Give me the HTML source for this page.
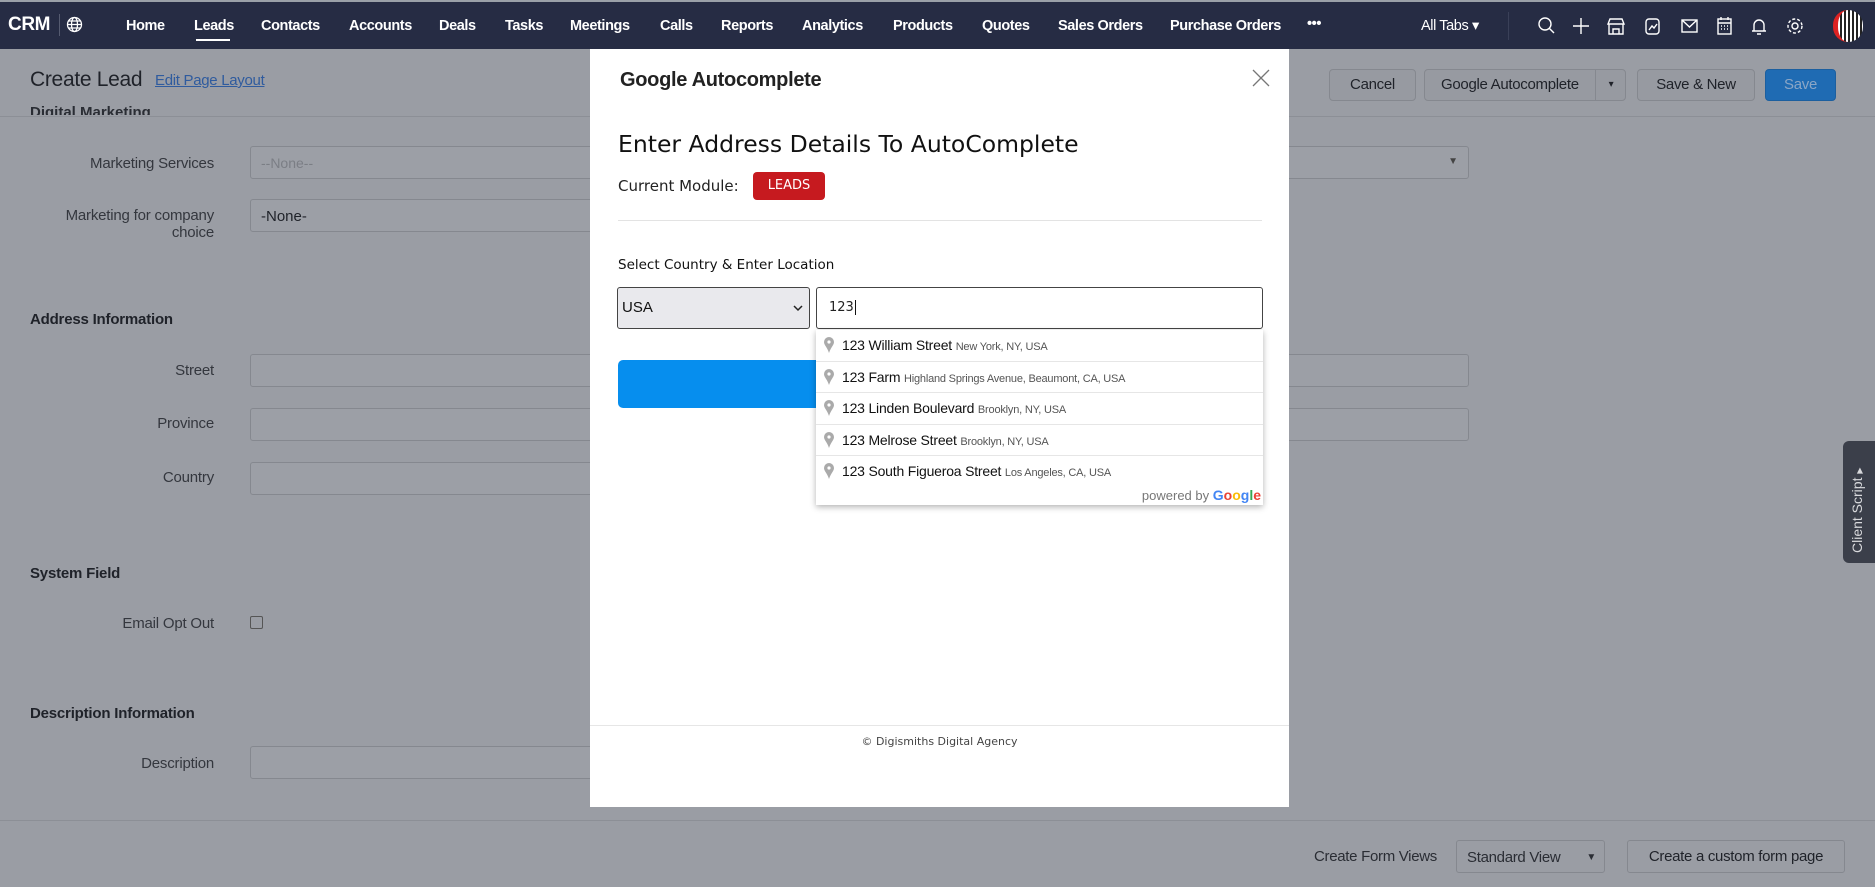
<!DOCTYPE html>
<html><head><meta charset="utf-8"><style>
*{box-sizing:border-box;margin:0;padding:0}
body{width:1875px;height:887px;overflow:hidden;background:#9a9da4;font-family:"Liberation Sans",sans-serif;position:relative;color:#1f2229}
.a{position:absolute;white-space:nowrap}
.nav{position:absolute;left:0;top:0;width:1875px;height:49px;background:#262c44;border-top:2px solid #9aa0a8}
.nav .a{color:#fff;font-size:14.5px;top:16px;font-weight:bold;letter-spacing:-0.4px}
.lbl{position:absolute;right:1661px;font-size:15px;color:#34373e;text-align:right;white-space:nowrap;letter-spacing:-0.2px}
.inp{position:absolute;left:250px;height:33px;border:1px solid #85888f;border-radius:3px;background:#9c9fa6}
.sec{position:absolute;left:30px;font-size:15px;font-weight:bold;color:#1f2229;letter-spacing:-0.2px}
.btn{position:absolute;top:69px;height:32px;border:1px solid #85888f;border-radius:4px;background:#979aa1;font-size:15px;color:#1f2229;text-align:center;line-height:30px;letter-spacing:-0.3px}
.modal{position:absolute;left:590px;top:49px;width:699px;height:758px;background:#fff}
.dj{font-family:"DejaVu Sans",sans-serif}
.row{position:absolute;left:0;width:100%;height:31px;border-top:1px solid #e6e6e6;font-size:14px;color:#111;line-height:31px;padding-left:26px;letter-spacing:-0.2px}
.row small{font-size:11px;color:#555}
.pin{position:absolute;left:8px;top:7px}
</style></head><body>
<div class="nav">
 <div class="a" style="left:8px;top:12px;font-size:19px;color:#fff;font-weight:bold">CRM</div>
 <div class="a" style="left:59px;top:12px;width:1px;height:22px;background:#555b70"></div>
 <svg class="a" style="left:66px;top:14px" width="17" height="17" viewBox="0 0 17 17" fill="none" stroke="#fff" stroke-width="1.3"><circle cx="8.5" cy="8.5" r="7"/><ellipse cx="8.5" cy="8.5" rx="3" ry="7"/><path d="M1.5 8.5h14M2.5 5h12M2.5 12h12"/></svg>
 <div class="a" style="left:126px">Home</div>
 <div class="a" style="left:194px">Leads</div>
 <div class="a" style="left:196px;top:37px;width:34px;height:2px;background:#fff"></div>
 <div class="a" style="left:261px">Contacts</div>
 <div class="a" style="left:349px">Accounts</div>
 <div class="a" style="left:439px">Deals</div>
 <div class="a" style="left:505px">Tasks</div>
 <div class="a" style="left:570px">Meetings</div>
 <div class="a" style="left:660px">Calls</div>
 <div class="a" style="left:721px">Reports</div>
 <div class="a" style="left:802px">Analytics</div>
 <div class="a" style="left:893px">Products</div>
 <div class="a" style="left:982px">Quotes</div>
 <div class="a" style="left:1058px">Sales Orders</div>
 <div class="a" style="left:1170px">Purchase Orders</div>
 <div class="a" style="left:1307px;top:14px">•••</div>
 <div class="a" style="left:1421px;font-weight:normal">All Tabs ▾</div>
 <div class="a" style="left:1508px;top:10px;width:1px;height:28px;background:#3a4058"></div>
 <svg class="a" style="left:1536px;top:14px" width="280" height="20" viewBox="0 0 280 20" fill="none" stroke="#fff" stroke-width="1.4">
  <circle cx="9" cy="8" r="6"/><path d="M13 12l5 5"/>
  <path d="M45 2v16M37 10h16"/>
  <path d="M74 3h12l2 5H72zM73 8v10h14V8M77 18v-5h6v5"/>
  <rect x="110" y="3" width="13" height="15" rx="3"/><path d="M113 14l3-4 2 2 3-4"/>
  <rect x="146" y="4" width="15" height="12"/><path d="M146 4l7.5 7 7.5-7"/>
  <rect x="182" y="3" width="13" height="15"/><path d="M182 7h13M185 1v3M192 1v3M185 10h1M188 10h1M191 10h1M185 13h1M188 13h1M191 13h1"/>
  <path d="M218 15V9a5 5 0 0110 0v6h2H216M221 18h4"/>
  <circle cx="259" cy="10" r="3"/><circle cx="259" cy="10" r="7" stroke-dasharray="3 2"/>
 </svg>
 <div class="a" style="left:1833px;top:8px;width:30px;height:32px;border-radius:15px;background:repeating-linear-gradient(90deg,#fff 0 2px,#222 2px 4px);border-left:5px solid #d22"></div>
</div>

<!-- background page -->
<div class="a" style="left:30px;top:68px;font-size:21px;color:#1f2229;letter-spacing:-0.3px">Create Lead</div>
<div class="a" style="left:155px;top:72px;font-size:15px;color:#2f5b9e;text-decoration:underline;letter-spacing:-0.3px">Edit Page Layout</div>
<div class="a" style="left:30px;top:104px;font-size:15px;font-weight:bold;color:#2a2d34;height:11px;overflow:hidden">Digital Marketing</div>
<div class="a" style="left:0;top:116px;width:1875px;height:1px;background:#8c8f96"></div>
<div class="btn" style="left:1329px;width:87px">Cancel</div>
<div class="btn" style="left:1424px;width:202px;text-align:left;padding-left:16px">Google Autocomplete<span style="position:absolute;left:170px;top:0;height:30px;border-left:1px solid #85888f;width:31px;text-align:center;font-size:10px">▾</span></div>
<div class="btn" style="left:1637px;width:118px">Save &amp; New</div>
<div class="btn" style="left:1765px;width:71px;background:#1f6bb3;border-color:#1c5f9f;color:#8ba6c6">Save</div>

<div class="lbl" style="top:155px">Marketing Services</div>
<div class="inp" style="top:146px;width:1219px"><span class="a" style="left:10px;top:8px;font-size:14px;color:#7b7e85">--None--</span><span class="a" style="right:10px;top:9px;font-size:10px;color:#444">▼</span></div>
<div class="lbl" style="top:207px;line-height:17px">Marketing for company<br>choice</div>
<div class="inp" style="top:199px;width:500px"><span class="a" style="left:10px;top:8px;font-size:15px;color:#1f2229">-None-</span></div>
<div class="sec" style="top:311px">Address Information</div>
<div class="lbl" style="top:362px">Street</div>
<div class="inp" style="top:354px;width:1219px"></div>
<div class="lbl" style="top:415px">Province</div>
<div class="inp" style="top:408px;width:1219px"></div>
<div class="lbl" style="top:469px">Country</div>
<div class="inp" style="top:462px;width:500px"></div>
<div class="sec" style="top:565px">System Field</div>
<div class="lbl" style="top:615px">Email Opt Out</div>
<div class="a" style="left:250px;top:616px;width:13px;height:13px;border:1px solid #555;border-radius:2px"></div>
<div class="sec" style="top:705px">Description Information</div>
<div class="lbl" style="top:755px">Description</div>
<div class="inp" style="top:746px;width:500px"></div>
<div class="a" style="left:0;top:820px;width:1875px;height:1px;background:#8c8f96"></div>
<div class="a" style="left:1314px;top:848px;font-size:15px;color:#2a2d34;letter-spacing:-0.3px">Create Form Views</div>
<div class="a" style="left:1456px;top:840px;width:149px;height:33px;border:1px solid #85888f;border-radius:3px;font-size:15px;padding:8px 10px;color:#2a2d34;letter-spacing:-0.3px">Standard View<span class="a" style="right:8px;top:11px;font-size:10px">▼</span></div>
<div class="a" style="left:1627px;top:840px;width:218px;height:33px;border:1px solid #85888f;border-radius:3px;font-size:15px;text-align:center;line-height:31px;color:#1f2229;letter-spacing:-0.3px">Create a custom form page</div>
<div class="a" style="left:1843px;top:441px;width:34px;height:122px;background:#3b3f4a;border-radius:6px 0 0 6px"><div class="a" style="left:6px;top:112px;transform:rotate(-90deg);transform-origin:0 0;color:#d8d9dc;font-size:14px">Client Script <span style="font-size:8px">▶</span></div></div>

<!-- modal -->
<div class="modal">
 <div class="a" style="left:30px;top:20px;font-size:20px;font-weight:bold;color:#222;letter-spacing:-0.3px">Google Autocomplete</div>
 <svg class="a" style="left:662px;top:20px" width="18" height="18" viewBox="0 0 18 18" stroke="#777" stroke-width="1.3"><path d="M1 1l16 16M17 1L1 17"/></svg>
 <div class="a dj" style="left:28px;top:81px;font-size:23.5px;color:#111">Enter Address Details To AutoComplete</div>
 <div class="a dj" style="left:28px;top:128px;font-size:15px;color:#222">Current Module:</div>
 <div class="a dj" style="left:163px;top:123px;width:72px;height:28px;background:#c61a1f;border-radius:4px;color:#fff;font-size:13px;text-align:center;line-height:28px">LEADS</div>
 <div class="a" style="left:28px;top:171px;width:644px;height:1px;background:#e3e3e3"></div>
 <div class="a dj" style="left:28px;top:208px;font-size:13.5px;color:#111">Select Country &amp; Enter Location</div>
 <div class="a" style="left:27px;top:238px;width:193px;height:42px;background:#e9e9ed;border:1px solid #444;border-radius:3px;font-size:15px;line-height:40px;padding-left:4px;color:#111">USA<svg class="a" style="right:6px;top:17px" width="10" height="7" viewBox="0 0 10 7" fill="none" stroke="#222" stroke-width="1.5"><path d="M1 1l4 4 4-4"/></svg></div>
 <div class="a dj" style="left:226px;top:238px;width:447px;height:42px;border:1px solid #444;border-radius:3px;font-size:13px;line-height:40px;padding-left:12px;color:#222">123 <span style="border-left:1px solid #111;margin-left:1px"></span></div>
 <div class="a" style="left:28px;top:311px;width:644px;height:48px;background:#068eee;border-radius:5px"></div>
 <div class="a" style="left:226px;top:281px;width:447px;height:175px;background:#fff;box-shadow:0 2px 6px rgba(0,0,0,.3)">
  <div class="row" style="top:0;border-top:none"><svg class="pin" width="10" height="16" viewBox="0 0 10 16"><path d="M5 0a5 5 0 015 5c0 3-3 5-5 11C3 10 0 8 0 5a5 5 0 015-5z" fill="#aaa"/><circle cx="5" cy="5" r="1.6" fill="#fff"/></svg>123 William Street <small>New York, NY, USA</small></div>
  <div class="row" style="top:31px"><svg class="pin" width="10" height="16" viewBox="0 0 10 16"><path d="M5 0a5 5 0 015 5c0 3-3 5-5 11C3 10 0 8 0 5a5 5 0 015-5z" fill="#aaa"/><circle cx="5" cy="5" r="1.6" fill="#fff"/></svg>123 Farm <small>Highland Springs Avenue, Beaumont, CA, USA</small></div>
  <div class="row" style="top:62px"><svg class="pin" width="10" height="16" viewBox="0 0 10 16"><path d="M5 0a5 5 0 015 5c0 3-3 5-5 11C3 10 0 8 0 5a5 5 0 015-5z" fill="#aaa"/><circle cx="5" cy="5" r="1.6" fill="#fff"/></svg>123 Linden Boulevard <small>Brooklyn, NY, USA</small></div>
  <div class="row" style="top:94px"><svg class="pin" width="10" height="16" viewBox="0 0 10 16"><path d="M5 0a5 5 0 015 5c0 3-3 5-5 11C3 10 0 8 0 5a5 5 0 015-5z" fill="#aaa"/><circle cx="5" cy="5" r="1.6" fill="#fff"/></svg>123 Melrose Street <small>Brooklyn, NY, USA</small></div>
  <div class="row" style="top:125px"><svg class="pin" width="10" height="16" viewBox="0 0 10 16"><path d="M5 0a5 5 0 015 5c0 3-3 5-5 11C3 10 0 8 0 5a5 5 0 015-5z" fill="#aaa"/><circle cx="5" cy="5" r="1.6" fill="#fff"/></svg>123 South Figueroa Street <small>Los Angeles, CA, USA</small></div>
  <div class="a" style="right:2px;top:157px;font-size:13px;color:#777">powered by <span style="font-weight:bold;font-size:14px"><span style="color:#4285f4">G</span><span style="color:#ea4335">o</span><span style="color:#fbbc05">o</span><span style="color:#4285f4">g</span><span style="color:#34a853">l</span><span style="color:#ea4335">e</span></span></div>
 </div>
 <div class="a" style="left:0;top:676px;width:699px;height:1px;background:#e6e6e6"></div>
 <div class="a dj" style="left:0;top:686px;width:699px;text-align:center;font-size:11px;color:#444">© Digismiths Digital Agency</div>
</div>
</body></html>
